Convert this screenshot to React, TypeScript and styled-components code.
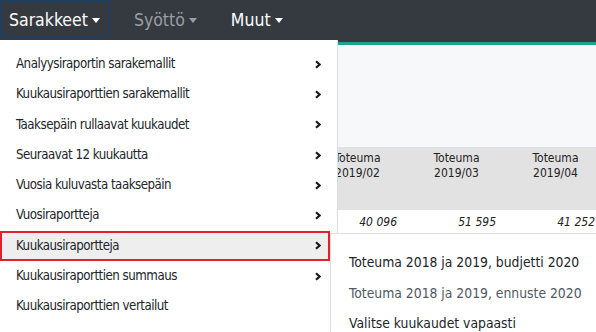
import React from 'react'
import styled, { createGlobalStyle } from 'styled-components'

const GlobalStyle = createGlobalStyle`
    html, body {
        margin: 0;
        padding: 0;
        width: 596px;
        height: 332px;
        overflow: hidden;
        background: #f7f8fa;
        font-family: "DejaVu Sans Condensed", "DejaVu Sans", sans-serif;
    }
`

const Page = styled.div`
    position: relative;
    width: 596px;
    height: 332px;
    overflow: hidden;
`

const Navbar = styled.nav`
    display: flex;
    align-items: flex-start;
    gap: 15px;
    height: 42px;
    background-color: #343a40;
`

const NavItem = styled.div<{ $active?: boolean; $muted?: boolean }>`
    display: flex;
    align-items: center;
    height: 37px;
    box-sizing: border-box;
    padding: 3px 8px 0 7px;
    font-size: 17.5px;
    color: ${p => (p.$muted ? '#9b9ea2' : '#ffffff')};
    border: 2px solid ${p => (p.$active ? '#1e3f5f' : 'transparent')};
    border-radius: 4px;
`

const Caret = styled.span`
    display: inline-block;
    margin-left: 4px;
    border-top: 5px solid currentColor;
    border-left: 4px solid transparent;
    border-right: 4px solid transparent;
`

const Content = styled.main`
    border-top: 3px solid #1ba394;
    height: 290px;
    padding-top: 102px;
    box-sizing: border-box;
    overflow: hidden;
`

const Table = styled.table`
    border-collapse: collapse;
    table-layout: fixed;
    width: 495px;
    margin-left: 110px;
    font-size: 12px;
    color: #222;
`

const HeadCell = styled.th<{ $span?: number }>`
    width: ${p => (p.$span ?? 1) * 99}px;
    height: 63px;
    padding: 4px 4px 0;
    box-sizing: border-box;
    vertical-align: top;
    text-align: center;
    font-weight: normal;
    line-height: 15px;
    background: #e2e2e2;
`

const NumCell = styled.td`
    height: 23px;
    padding: 0 10px 0 0;
    text-align: right;
    font-style: italic;
    background: #ffffff;
`

const Menu = styled.ul`
    position: absolute;
    top: 40px;
    left: 0;
    width: 338px;
    height: 300px;
    margin: 0;
    padding: 9px 0 0;
    list-style: none;
    background: #ffffff;
    border-right: 1px solid #dcdcdc;
    box-sizing: border-box;
`

const MenuItem = styled.li<{ $selected?: boolean }>`
    display: flex;
    align-items: center;
    justify-content: space-between;
    width: 330px;
    box-sizing: border-box;
    padding: 5px 9px 5px 16px;
    line-height: 20.3px;
    font-size: 13.2px;
    letter-spacing: -0.5px;
    color: #212529;
    background: ${p => (p.$selected ? '#eeeeee' : 'transparent')};
    box-shadow: ${p => (p.$selected ? 'inset 0 0 0 2px #e0202a' : 'none')};
`

const SubMenu = styled.ul`
    position: absolute;
    top: 233px;
    left: 330px;
    width: 280px;
    height: 110px;
    margin: 0;
    padding: 13px 0 0;
    list-style: none;
    background: #ffffff;
    border: 1px solid #dddddd;
    box-sizing: border-box;
`

const SubItem = styled.li<{ $dim?: boolean }>`
    padding: 5px 18px;
    line-height: 20.5px;
    font-size: 13.8px;
    color: ${p => (p.$dim ? '#4f5962' : '#212529')};
`

const Chevron = () => (
    <svg width="6" height="9" viewBox="0 0 6 9">
        <path d="M1 1.2 L4.6 4.5 L1 7.8" fill="none" stroke="#1a1a1a" strokeWidth="2.2" />
    </svg>
)

const items = [
    { label: 'Analyysiraportin sarakemallit', sub: true },
    { label: 'Kuukausiraporttien sarakemallit', sub: true },
    { label: 'Taaksepäin rullaavat kuukaudet', sub: true },
    { label: 'Seuraavat 12 kuukautta', sub: true },
    { label: 'Vuosia kuluvasta taaksepäin', sub: true },
    { label: 'Vuosiraportteja', sub: true },
    { label: 'Kuukausiraportteja', sub: true, selected: true },
    { label: 'Kuukausiraporttien summaus', sub: true },
    { label: 'Kuukausiraporttien vertailut', sub: false },
]

const columns = [
    { month: '2019/02', value: '40 096' },
    { month: '2019/03', value: '51 595' },
    { month: '2019/04', value: '41 252' },
]

const App = () => {
    return (
        <Page>
            <GlobalStyle />
            <Navbar>
                <NavItem $active>
                    Sarakkeet
                    <Caret />
                </NavItem>
                <NavItem $muted>
                    Syöttö
                    <Caret />
                </NavItem>
                <NavItem>
                    Muut
                    <Caret />
                </NavItem>
            </Navbar>
            <Content>
                <Table>
                    <thead>
                        <tr>
                            <HeadCell $span={2} />
                            {columns.map(c => (
                                <HeadCell key={c.month}>
                                    Toteuma
                                    <br />
                                    {c.month}
                                </HeadCell>
                            ))}
                        </tr>
                    </thead>
                    <tbody>
                        <tr>
                            <NumCell />
                            {columns.map(c => (
                                <NumCell key={c.month}>{c.value}</NumCell>
                            ))}
                        </tr>
                    </tbody>
                </Table>
            </Content>
            <Menu>
                {items.map(item => (
                    <MenuItem key={item.label} $selected={item.selected}>
                        {item.label}
                        {item.sub && <Chevron />}
                    </MenuItem>
                ))}
            </Menu>
            <SubMenu>
                <SubItem>Toteuma 2018 ja 2019, budjetti 2020</SubItem>
                <SubItem $dim>Toteuma 2018 ja 2019, ennuste 2020</SubItem>
                <SubItem>Valitse kuukaudet vapaasti</SubItem>
            </SubMenu>
        </Page>
    )
}

export default App
